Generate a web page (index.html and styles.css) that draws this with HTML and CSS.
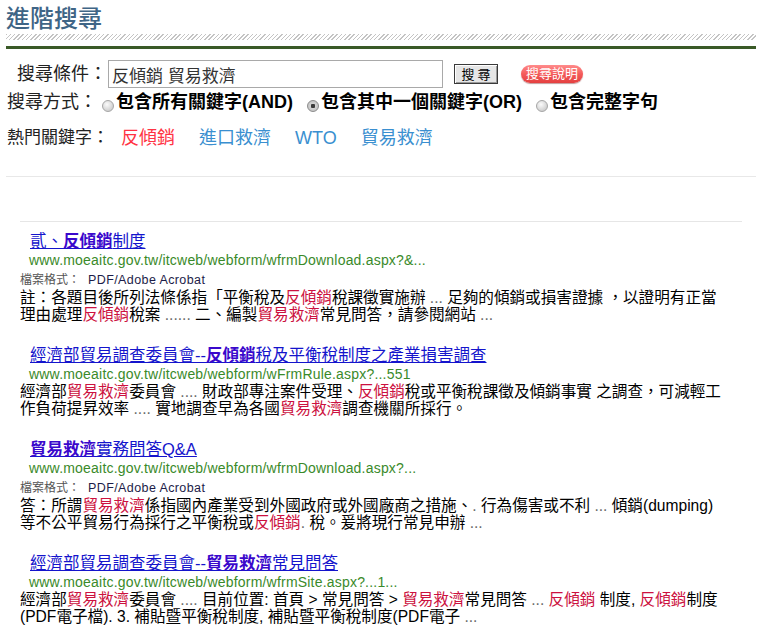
FILE: index.html
```html
<!DOCTYPE html>
<html lang="zh-Hant">
<head>
<meta charset="utf-8">
<title>進階搜尋</title>
<link rel="stylesheet" href="styles.css">
</head>
<body>
<div class="page">
  <h1 class="page-title">進階搜尋</h1>
  <div class="hatch"></div>
  <div class="green-bar"></div>

  <form class="search-form">
    <div class="row row-query">
      <span class="label">搜尋條件：</span>
      <input class="query" type="text" value="反傾銷 貿易救濟">
      <button class="btn-search" type="button">搜 尋</button>
      <span class="btn-help">搜尋說明</span>
    </div>
    <div class="row row-mode">
      <span class="label">搜尋方式：</span>
      <input class="radio" type="radio" name="mode">
      <span class="opt">包含所有關鍵字(AND)</span>
      <input class="radio" type="radio" name="mode" checked>
      <span class="opt">包含其中一個關鍵字(OR)</span>
      <input class="radio" type="radio" name="mode">
      <span class="opt">包含完整字句</span>
    </div>
    <div class="row row-hot">
      <span class="label-hot">熱門關鍵字：</span>
      <a class="hot hot-red">反傾銷</a>
      <a class="hot">進口救濟</a>
      <a class="hot">WTO</a>
      <a class="hot">貿易救濟</a>
    </div>
  </form>

  <div class="rule-wide"></div>

  <div class="results">
    <div class="rule-inner"></div>

    <div class="result">
      <div class="title"><a>貳、<b>反傾銷</b>制度</a></div>
      <div class="url">www.moeaitc.gov.tw/itcweb/webform/wfrmDownload.aspx?&amp;...</div>
      <div class="ft"><span class="ft-label">檔案格式：</span><span class="ft-val">PDF/Adobe Acrobat</span></div>
      <div class="snippet">註：各題目後所列法條係指「平衡稅及<em>反傾銷</em>稅課徵實施辦 <span class="dots">...</span> 足夠的傾銷或損害證據 ，以證明有正當<br>理由處理<em>反傾銷</em>稅案 <span class="dots">......</span> 二、編製<em>貿易救濟</em>常見問答，請參閱網站 <span class="dots">...</span></div>
    </div>

    <div class="result">
      <div class="title"><a>經濟部貿易調查委員會--<b>反傾銷</b>稅及平衡稅制度之產業損害調查</a></div>
      <div class="url">www.moeaitc.gov.tw/itcweb/webform/wFrmRule.aspx?...551</div>
      <div class="snippet">經濟部<em>貿易救濟</em>委員會 <span class="dots">....</span> 財政部專注案件受理、<em>反傾銷</em>稅或平衡稅課徵及傾銷事實 之調查，可減輕工<br>作負荷提昇效率 <span class="dots">....</span> 實地調查早為各國<em>貿易救濟</em>調查機關所採行。</div>
    </div>

    <div class="result">
      <div class="title"><a><b>貿易救濟</b>實務問答Q&amp;A</a></div>
      <div class="url">www.moeaitc.gov.tw/itcweb/webform/wfrmDownload.aspx?...</div>
      <div class="ft"><span class="ft-label">檔案格式：</span><span class="ft-val">PDF/Adobe Acrobat</span></div>
      <div class="snippet">答：所謂<em>貿易救濟</em>係指國內產業受到外國政府或外國廠商之措施、<span class="dots">.</span> 行為傷害或不利 <span class="dots">...</span> 傾銷(dumping)<br>等不公平貿易行為採行之平衡稅或<em>反傾銷</em><span class="dots">.</span> 稅。爰將現行常見申辦 <span class="dots">...</span></div>
    </div>

    <div class="result">
      <div class="title"><a>經濟部貿易調查委員會--<b>貿易救濟</b>常見問答</a></div>
      <div class="url">www.moeaitc.gov.tw/itcweb/webform/wfrmSite.aspx?...1...</div>
      <div class="snippet">經濟部<em>貿易救濟</em>委員會 <span class="dots">....</span> 目前位置: 首頁 &gt; 常見問答 &gt; <em>貿易救濟</em>常見問答 <span class="dots">...</span> <em>反傾銷</em> 制度, <em>反傾銷</em>制度<br>(PDF電子檔). 3. 補貼暨平衡稅制度, 補貼暨平衡稅制度(PDF電子 <span class="dots">...</span></div>
    </div>
  </div>
</div>
</body>
</html>
```

FILE: styles.css
```css
html, body {
  margin: 0;
  padding: 0;
  background: #ffffff;
}

body {
  font-family: "Liberation Sans", "Noto Sans CJK TC", sans-serif;
  color: #111;
}

.page {
  padding: 0 8px 0 6px;
}

.page-title {
  margin: 0;
  padding-top: 5px;
  font-size: 24px;
  line-height: 28px;
  font-weight: 500;
  color: #3f6586;
}

.hatch {
  margin-top: 1px;
  height: 6px;
  background: repeating-linear-gradient(135deg, #c4c4c4 0 1px, #ffffff 1px 3px);
}

.green-bar {
  margin-top: 6px;
  height: 3px;
  background: #3a5a27;
}

.search-form {
  margin: 0;
}

.row {
  display: flex;
  align-items: center;
}

.row-query {
  margin-top: 11px;
  height: 28px;
  padding-left: 11px;
}

.label {
  font-size: 18px;
  line-height: 22px;
  color: #222;
}

.query {
  box-sizing: border-box;
  margin: 0 0 0 1px;
  width: 335px;
  height: 28px;
  padding: 0 3px;
  border: 1px solid #a9a9a9;
  font-family: "Liberation Sans", "Noto Sans CJK TC", sans-serif;
  font-size: 17px;
  color: #333;
  outline: none;
}

.btn-search {
  box-sizing: border-box;
  margin: 0 0 0 11px;
  width: 44px;
  height: 20px;
  padding: 0;
  border: 1px solid #3a3a3a;
  background: #e6e6e6;
  box-shadow: inset 1px 1px 0 #ffffff, inset -1px -1px 0 #9a9a9a;
  font-family: "Noto Sans CJK TC", sans-serif;
  font-size: 13px;
  line-height: 18px;
  color: #000;
}

.btn-help {
  box-sizing: border-box;
  margin-left: 23px;
  width: 62px;
  height: 18px;
  border-radius: 9px;
  background: linear-gradient(#ff8c8c, #f45a5a 50%, #e43f3f);
  box-shadow: 0 1px 1px rgba(120, 30, 30, 0.45);
  color: #ffffff;
  font-size: 13px;
  line-height: 18px;
  text-align: center;
}

.row-mode {
  margin-top: 3px;
  height: 22px;
  padding-left: 1px;
}

.radio {
  appearance: none;
  -webkit-appearance: none;
  box-sizing: border-box;
  width: 12px;
  height: 12px;
  margin: 8px 2px 0 5px;
  border: 1px solid #a6a6a6;
  border-radius: 50%;
  background: radial-gradient(circle at 40% 35%, #fbfbfb, #cbcbcb 80%);
}

.radio:checked {
  background: radial-gradient(circle, #3c3c3c 0 2px, #d4d4d4 2.5px, #b8b8b8 100%);
  border-color: #8c8c8c;
}

.opt {
  font-size: 18px;
  line-height: 22px;
  font-weight: bold;
  color: #000;
  margin-right: 9px;
}

.row-hot {
  margin-top: 14px;
  height: 22px;
  padding-left: 1px;
}

.label-hot {
  font-size: 17px;
  line-height: 22px;
  color: #222;
  margin-right: 12px;
}

.hot {
  font-size: 18px;
  line-height: 22px;
  color: #3a8fd0;
  margin-right: 24px;
}

.hot-red {
  color: #ff3344;
}

.rule-wide {
  margin-top: 27px;
  border-top: 1px solid #e8e8e8;
}

.results {
  margin: 44px 14px 0 14px;
}

.rule-inner {
  border-top: 1px solid #e6e6e6;
  margin-bottom: 9px;
}

.result {
  margin-bottom: 22px;
}

.title {
  padding-left: 10px;
  font-size: 16.5px;
  line-height: 20px;
  white-space: nowrap;
}

.title a {
  color: #1414cc;
  text-decoration: underline;
}

.title b {
  color: #3a08cc;
}

.url {
  padding-left: 9px;
  font-size: 14px;
  line-height: 18px;
  letter-spacing: 0.2px;
  color: #3a8a2a;
  white-space: nowrap;
}

.ft {
  padding-top: 3px;
  font-size: 12px;
  line-height: 17px;
  white-space: nowrap;
}

.ft-label {
  color: #555;
}

.ft-val {
  margin-left: 8px;
  font-size: 12.5px;
  letter-spacing: 0.4px;
  color: #1c1c48;
}

.snippet {
  font-size: 15.6px;
  line-height: 17px;
  color: #000;
  white-space: nowrap;
}

.snippet em {
  font-style: normal;
  color: #cc1140;
}

.dots {
  color: #6a6a6a;
}
```
